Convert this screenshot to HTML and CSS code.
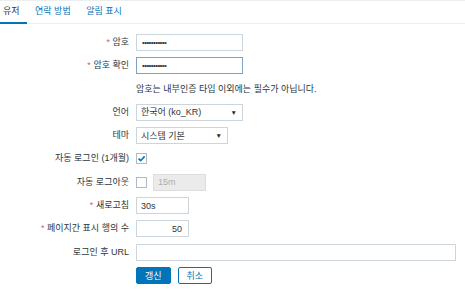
FILE: index.html
```html
<!DOCTYPE html>
<html lang="ko">
<head>
  <meta charset="UTF-8" />
  <title>유저 프로필</title>
  <link rel="stylesheet" href="styles.css">
</head>
<body>

  <ul class="tabs">
    <li class="tab active">유저</li>
    <li class="tab">연락 방법</li>
    <li class="tab">알림 표시</li>
  </ul>

  <form class="form">
    <label class="lbl req">암호</label>
    <div class="fld"><input type="password" class="txt w-md" value="aaaaaaaaaaa" /></div>

    <label class="lbl req">암호 확인</label>
    <div class="fld"><input type="password" class="txt w-md focus" value="aaaaaaaaaaa" /></div>

    <div></div>
    <div class="fld hint">암호는 내부인증 타입 이외에는 필수가 아닙니다.</div>

    <label class="lbl">언어</label>
    <div class="fld">
      <span class="sel w-md"><select><option>한국어 (ko_KR)</option></select></span>
    </div>

    <label class="lbl">테마</label>
    <div class="fld">
      <span class="sel w-sm"><select><option>시스템 기본</option></select></span>
    </div>

    <label class="lbl">자동 로그인 (1개월)</label>
    <div class="fld">
      <span class="chk">
        <svg width="9" height="9" viewBox="0 0 9 9"><path d="M1.5 4.6 L3.7 6.7 L7.6 2.4" fill="none" stroke="#0275b8" stroke-width="1.6"/></svg>
      </span>
    </div>

    <label class="lbl">자동 로그아웃</label>
    <div class="fld">
      <span class="chk"></span>
      <input type="text" class="txt w-xs" value="15m" disabled />
    </div>

    <label class="lbl req">새로고침</label>
    <div class="fld"><input type="text" class="txt w-xs" value="30s" /></div>

    <label class="lbl req">페이지간 표시 행의 수</label>
    <div class="fld"><input type="text" class="txt w-xs num" value="50" /></div>

    <label class="lbl">로그인 후 URL</label>
    <div class="fld"><input type="text" class="txt w-lg" value="" /></div>

    <div></div>
    <div class="fld btns">
      <button type="button" class="btn btn-main">갱신</button>
      <button type="button" class="btn btn-alt">취소</button>
    </div>
  </form>

</body>
</html>
```

FILE: styles.css
```css
body {
  margin: 0;
  border-top: 1px solid #eceef0;
  font-family: "Liberation Sans", Arial, "Noto Sans CJK KR", sans-serif;
  font-size: 9px;
  color: #2b363c;
  background: #fff;
}
.tabs {
  display: flex;
  gap: 1.5px;
  margin: 0 0 0 -4px;
  padding: 0;
  list-style: none;
  border-bottom: 1px solid #eceef0;
}
.tab {
  padding: 0 7px;
  line-height: 21px;
  color: #0275b8;
  border-bottom: 2px solid transparent;
  margin-bottom: -1px;
}
.tab.active {
  color: #2b363c;
  border-bottom-color: #0275b8;
}
.form {
  display: grid;
  grid-template-columns: 129px 1fr;
  column-gap: 7px;
  row-gap: 6.3px;
  align-items: center;
  padding-top: 10px;
}
.lbl {
  text-align: right;
  line-height: 17px;
  white-space: nowrap;
}
.req::before {
  content: "* ";
  color: #e45959;
}
.fld {
  display: flex;
  align-items: center;
  gap: 6px;
  height: 17px;
}
.hint { line-height: 17px; }
.txt, .sel select {
  height: 17px;
  box-sizing: border-box;
  border: 1px solid #cdd5dc;
  padding: 0 4px;
  margin: 0;
  font-family: inherit;
  font-size: 9px;
  color: #2b363c;
  background: #fff;
  outline: none;
}
.txt[type="password"] { padding-left: 5px; letter-spacing: -0.6px; font-size: 8px; }
.txt.focus { border-color: #7ea3c2; }
.txt:disabled {
  background: #ebebeb;
  border-color: #dcdcdc;
  color: #acacac;
}
.num { text-align: right; padding-right: 6px; }
.w-xs { width: 53px; }
.w-md { width: 107px; }
.w-sm { width: 92px; }
.w-lg { width: 320px; }
.sel {
  position: relative;
  display: inline-block;
  height: 17px;
}
.sel select {
  width: 100%;
  -webkit-appearance: none;
  appearance: none;
}
.sel::after {
  content: "▼";
  position: absolute;
  right: 6px;
  top: 4px;
  font-size: 6.5px;
  line-height: 9px;
  color: #1f2c33;
  pointer-events: none;
}
.chk {
  display: inline-flex;
  align-items: center;
  justify-content: center;
  width: 11px;
  height: 11px;
  box-sizing: border-box;
  border: 1px solid #acbbc7;
  background: #fff;
}
.btns { gap: 7px; }
.btn {
  height: 17px;
  box-sizing: border-box;
  padding: 0 8px;
  border: 1px solid #0275b8;
  border-radius: 2px;
  font-family: inherit;
  font-size: 9px;
  cursor: pointer;
}
.btn-main { background: #0275b8; color: #fff; }
.btn-alt { background: #fff; color: #0275b8; }
```
